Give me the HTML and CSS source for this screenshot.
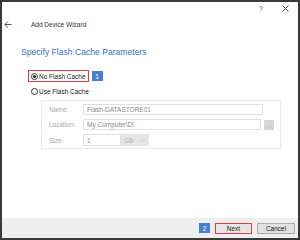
FILE: index.html
```html
<!DOCTYPE html>
<html lang="en">
<head>
    <meta charset="UTF-8">
    <title>Add Device Wizard</title>
    <link rel="stylesheet" href="styles.css">
</head>
<body>
    <div class="window">
        <div class="controls">
            <span class="help">?</span>
            <svg class="close" width="7" height="7" viewBox="0 0 7 7">
                <path d="M0.5 0.5 L6.5 6.5 M6.5 0.5 L0.5 6.5" stroke="#444" stroke-width="0.9"/>
            </svg>
        </div>

        <div class="title-row">
            <svg class="back" width="8" height="7" viewBox="0 0 8 7">
                <path d="M7.5 3.5 H1 M3.8 0.6 L0.9 3.5 L3.8 6.4" stroke="#444" stroke-width="0.9" fill="none"/>
            </svg>
            <span class="title">Add Device Wizard</span>
        </div>

        <div class="content">
            <h1>Specify Flash Cache Parameters</h1>

            <div class="option-row">
                <label class="option highlight">
                    <span class="radio checked"></span>No Flash Cache
                </label>
                <span class="badge">1</span>
            </div>
            <div class="option-row">
                <label class="option">
                    <span class="radio"></span>Use Flash Cache
                </label>
            </div>

            <div class="group">
                <div class="field">
                    <span class="field-label">Name:</span>
                    <span class="input name-input">Flash-DATASTORE01</span>
                </div>
                <div class="field">
                    <span class="field-label">Location:</span>
                    <span class="input location-input">My Computer\D\</span>
                    <span class="browse">...</span>
                </div>
                <div class="field">
                    <span class="field-label">Size:</span>
                    <span class="input size-input">1</span>
                    <span class="unit">GB
                        <svg width="5" height="3" viewBox="0 0 5 3">
                            <path d="M0.3 0.3 L2.5 2.5 L4.7 0.3" stroke="#bbb" stroke-width="0.7" fill="none"/>
                        </svg>
                    </span>
                </div>
            </div>
        </div>

        <div class="footer">
            <span class="badge">2</span>
            <span class="button next">Next</span>
            <span class="button">Cancel</span>
        </div>
    </div>
</body>
</html>
```

FILE: styles.css
```css
body {
    margin: 0;
    font-family: "Liberation Sans", Arial, sans-serif;
    font-size: 6.5px;
    color: #222;
}
.window {
    width: 300px;
    height: 240px;
    box-sizing: border-box;
    border: 2px solid #3a3a3a;
    background: #fff;
    display: flex;
    flex-direction: column;
}
.controls {
    height: 12px;
    display: flex;
    justify-content: flex-end;
    align-items: center;
    gap: 19px;
    padding-right: 9px;
}
.help {
    font-size: 7px;
    color: #555;
}
.title-row {
    height: 12px;
    margin-top: 4px;
    display: flex;
    align-items: center;
    padding-left: 2px;
}
.title {
    margin-left: 19px;
    color: #333;
}
.content {
    flex: 1;
    padding-left: 19px;
}
h1 {
    margin: 16px 0 0;
    height: 12px;
    line-height: 12px;
    font-size: 8.6px;
    font-weight: normal;
    color: #3471c2;
}
.option-row {
    height: 12px;
    margin-top: 3px;
    display: flex;
    align-items: center;
}
.option-row:first-of-type {
    margin-top: 12px;
}
.option {
    height: 12px;
    box-sizing: border-box;
    margin-left: 7px;
    padding: 0 2px;
    display: flex;
    align-items: center;
    gap: 1px;
    white-space: nowrap;
    border: 1px solid transparent;
}
.highlight {
    border-color: #e0393e;
}
.radio {
    width: 5px;
    height: 5px;
    border: 0.8px solid #333;
    border-radius: 50%;
    display: flex;
    align-items: center;
    justify-content: center;
}
.radio.checked::after {
    content: "";
    width: 3px;
    height: 3px;
    border-radius: 50%;
    background: #222;
}
.badge {
    width: 11px;
    height: 10px;
    margin-left: 3px;
    background: #4a7fd6;
    color: #fff;
    display: flex;
    align-items: center;
    justify-content: center;
}
.group {
    width: 240px;
    height: 49px;
    box-sizing: border-box;
    margin: 3px 0 0 20px;
    border: 1px solid #e8e8e8;
    padding: 3px 0 0 7px;
    display: flex;
    flex-direction: column;
    gap: 4px;
}
.field {
    display: flex;
    align-items: center;
}
.field-label {
    width: 34px;
    color: #aaa;
}
.input {
    height: 11px;
    box-sizing: border-box;
    border: 1px solid #e0e0e0;
    padding-left: 3px;
    display: flex;
    align-items: center;
    color: #888;
}
.name-input {
    width: 180px;
}
.location-input {
    width: 178px;
}
.browse {
    width: 10px;
    height: 10px;
    margin-left: 3px;
    background: #d6d6d6;
    color: #999;
    font-size: 6px;
    display: flex;
    align-items: center;
    justify-content: center;
}
.size-input {
    width: 38px;
    height: 12px;
}
.unit {
    width: 28px;
    height: 12px;
    box-sizing: border-box;
    background: #e6e6e6;
    color: #b0b0b0;
    padding: 0 3px;
    display: flex;
    align-items: center;
    justify-content: space-between;
}
.footer {
    height: 20px;
    background: #efefef;
    display: flex;
    align-items: center;
    justify-content: flex-end;
    padding-right: 3px;
    gap: 4px;
}
.footer .badge {
    margin: 0;
}
.button {
    width: 38px;
    height: 11px;
    box-sizing: border-box;
    border: 1px solid #adadad;
    background: #e1e1e1;
    color: #222;
    display: flex;
    align-items: center;
    justify-content: center;
    margin-left: 1px;
}
.button.next {
    width: 37px;
    border-color: #e0393e;
    background: #e6e6e6;
}
```
